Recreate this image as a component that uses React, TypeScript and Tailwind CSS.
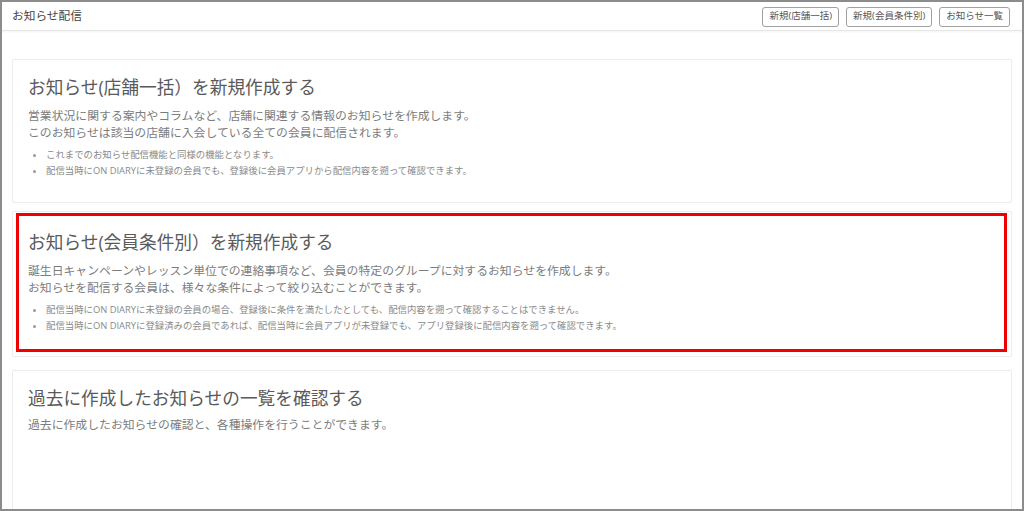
import React from "react";

const font = { fontFamily: '"Open Sans", "Noto Sans CJK JP", sans-serif' };

function Bullets({ items }: { items: string[] }) {
  return (
    <ul className="mt-[6px] pl-[18px] list-disc text-[9.4px] leading-[16px] text-[#8a8a8a] marker:text-[#999]">
      {items.map((item, i) => (
        <li key={i}>{item}</li>
      ))}
    </ul>
  );
}

export default function App() {
  return (
    <div
      className="w-[1024px] h-[511px] overflow-hidden bg-white border-2 border-[#8c8c8c]"
      style={font}
    >
      {/* Header */}
      <div className="h-[29px] flex items-center justify-between pl-[10px] pr-[12px] border-b border-[#e6e6e6] shadow-[0_1px_2px_rgba(0,0,0,0.05)]">
        <div className="text-[11.7px] text-[#444]">お知らせ配信</div>
        <div className="flex items-center gap-[7px] pt-[1px]">
          {["新規(店舗一括)", "新規(会員条件別)", "お知らせ一覧"].map((label) => (
            <button
              key={label}
              className="h-[20px] px-[6px] text-[9.5px] text-[#555] bg-white border border-[#a0a0a0] rounded-[3px]"
            >
              {label}
            </button>
          ))}
        </div>
      </div>

      <div className="px-[10px] pt-[28px]">
        {/* Card 1 */}
        <div className="border border-[#ececec] rounded-[2px] pl-[15px] pr-[15px] pt-[15px] pb-[23px]">
          <h3 className="text-[17.7px] leading-[24px] text-[#5a5a5a]">
            お知らせ(店舗一括）を新規作成する
          </h3>
          <p className="mt-[8px] text-[11.85px] leading-[17px] text-[#7c7c7c]">
            営業状況に関する案内やコラムなど、店舗に関連する情報のお知らせを作成します。
            <br />
            このお知らせは該当の店舗に入会している全ての会員に配信されます。
          </p>
          <Bullets
            items={[
              "これまでのお知らせ配信機能と同様の機能となります。",
              "配信当時にON DIARYに未登録の会員でも、登録後に会員アプリから配信内容を遡って確認できます。",
            ]}
          />
        </div>

        {/* Card 2 (highlighted) */}
        <div className="mt-[8px] border border-[#ececec] rounded-[2px] pt-[1px] pl-[3px] pr-[4px] pb-[4px]">
          <div className="border-[3px] border-[#f00000] pl-[9px] pr-[9px] pt-[14px] pb-[15px]">
            <h3 className="text-[17.7px] leading-[24px] text-[#5a5a5a]">
              お知らせ(会員条件別）を新規作成する
            </h3>
            <p className="mt-[8px] text-[11.85px] leading-[17px] text-[#7c7c7c]">
              誕生日キャンペーンやレッスン単位での連絡事項など、会員の特定のグループに対するお知らせを作成します。
              <br />
              お知らせを配信する会員は、様々な条件によって絞り込むことができます。
            </p>
            <Bullets
              items={[
                "配信当時にON DIARYに未登録の会員の場合、登録後に条件を満たしたとしても、配信内容を遡って確認することはできません。",
                "配信当時にON DIARYに登録済みの会員であれば、配信当時に会員アプリが未登録でも、アプリ登録後に配信内容を遡って確認できます。",
              ]}
            />
          </div>
        </div>

        {/* Card 3 */}
        <div className="mt-[13px] h-[200px] border border-[#ececec] rounded-[2px] pl-[15px] pr-[15px] pt-[15px]">
          <h3 className="text-[17.7px] leading-[24px] text-[#5a5a5a]">
            過去に作成したお知らせの一覧を確認する
          </h3>
          <p className="mt-[6px] text-[11.85px] leading-[17px] text-[#7c7c7c]">
            過去に作成したお知らせの確認と、各種操作を行うことができます。
          </p>
        </div>
      </div>
    </div>
  );
}
